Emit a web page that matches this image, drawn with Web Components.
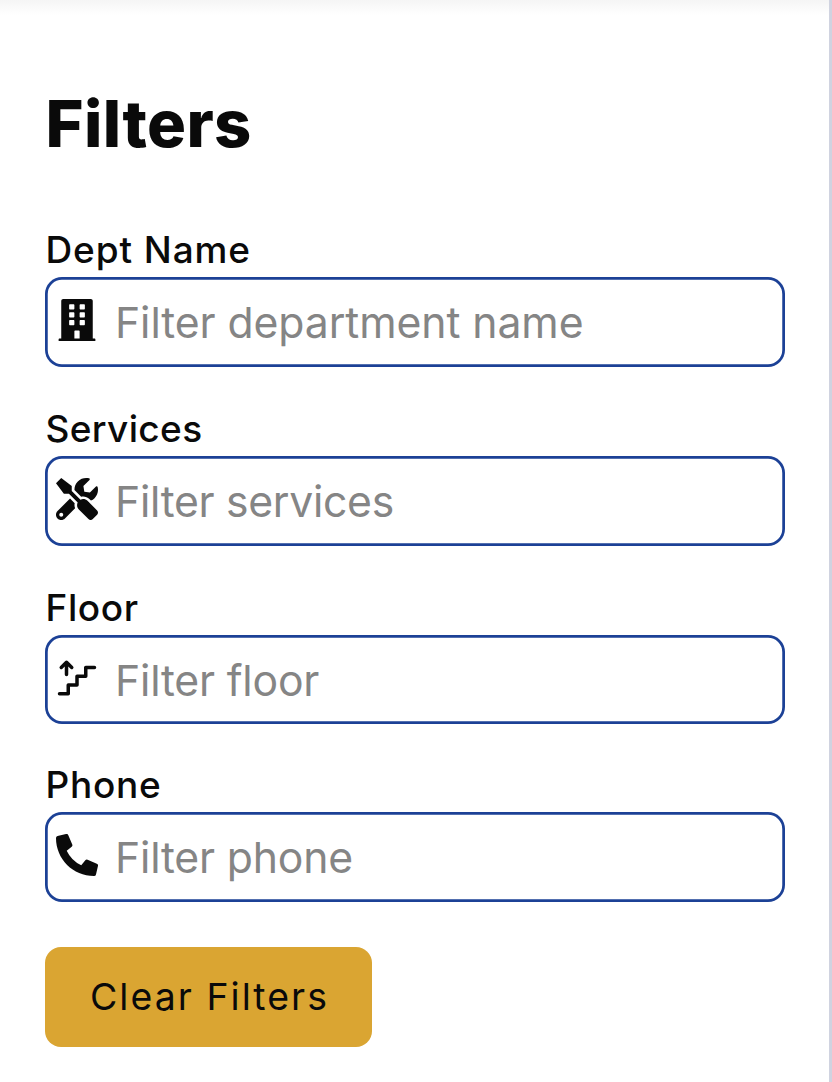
<!DOCTYPE html>
<html lang="en">
<head>
<meta charset="utf-8">
<title>Filters</title>
<style>
html,body{margin:0;height:100%;background:#fff}
body{font-family:Inter,"Liberation Sans",sans-serif;color:#0a0a0a;overflow:hidden}
</style>
</head>
<body>
<filter-panel>
  <span slot="title">Filters</span>
  <filter-field icon="building" style="--ls:.9px;--ps:-.08px"><span slot="label">Dept Name</span>Filter department name</filter-field>
  <filter-field icon="tools" style="--ls:.35px;--ps:-.29px"><span slot="label">Services</span>Filter services</filter-field>
  <filter-field icon="stairs" style="--ls:.6px;--ps:-.18px;--h:89px"><span slot="label">Floor</span>Filter floor</filter-field>
  <filter-field icon="phone" style="--ls:.72px;--ps:-.17px"><span slot="label">Phone</span>Filter phone</filter-field>
  <clear-button slot="action">Clear Filters</clear-button>
</filter-panel>
<script>
const icons = {
  building: '<svg viewBox="-32 0 512 512"><path d="M436 480h-20V24c0-13.255-10.745-24-24-24H56C42.745 0 32 10.745 32 24v456H12c-6.627 0-12 5.373-12 12v20h448v-20c0-6.627-5.373-12-12-12zM128 76c0-6.627 5.373-12 12-12h40c6.627 0 12 5.373 12 12v40c0 6.627-5.373 12-12 12h-40c-6.627 0-12-5.373-12-12V76zm0 96c0-6.627 5.373-12 12-12h40c6.627 0 12 5.373 12 12v40c0 6.627-5.373 12-12 12h-40c-6.627 0-12-5.373-12-12v-40zm52 148h-40c-6.627 0-12-5.373-12-12v-40c0-6.627 5.373-12 12-12h40c6.627 0 12 5.373 12 12v40c0 6.627-5.373 12-12 12zm76 160h-64v-84c0-6.627 5.373-12 12-12h40c6.627 0 12 5.373 12 12v84zm64-172c0 6.627-5.373 12-12 12h-40c-6.627 0-12-5.373-12-12v-40c0-6.627 5.373-12 12-12h40c6.627 0 12 5.373 12 12v40zm0-96c0 6.627-5.373 12-12 12h-40c-6.627 0-12-5.373-12-12v-40c0-6.627 5.373-12 12-12h40c6.627 0 12 5.373 12 12v40zm0-96c0 6.627-5.373 12-12 12h-40c-6.627 0-12-5.373-12-12V76c0-6.627 5.373-12 12-12h40c6.627 0 12 5.373 12 12v40z"/></svg>',
  tools: '<svg viewBox="0 0 512 512"><path d="M501.1 395.7L384 278.6c-23.1-23.1-57.6-27.6-85.4-13.9L192 158.1V96L64 0 0 64l96 128h62.1l106.6 106.6c-13.6 27.8-9.2 62.3 13.9 85.4l117.1 117.1c14.6 14.6 38.2 14.6 52.7 0l52.7-52.7c14.5-14.6 14.5-38.2 0-52.7zM331.7 225c28.3 0 54.9 11 74.9 31l19.4 19.4c15.8-6.9 30.8-16.5 43.8-29.5 37.1-37.1 49.7-89.3 37.9-136.7-2.2-9-13.5-12.1-20.1-5.5l-74.4 74.4-67.9-11.3L334 98.9l74.4-74.4c6.6-6.6 3.4-17.9-5.7-20.2-47.4-11.7-99.6.9-136.6 37.9-28.5 28.5-41.9 66.1-41.2 103.6l82.1 82.1c8.1-1.9 16.5-2.9 24.7-2.9zm-103.9 82l-56.7-56.7L18.7 402.8c-25 25-25 65.5 0 90.5s65.5 25 90.5 0l123.6-123.6c-7.6-19.9-9.9-41.6-5-62.7zM64 472c-13.2 0-24-10.8-24-24 0-13.3 10.7-24 24-24s24 10.7 24 24c0 13.2-10.7 24-24 24z"/></svg>',
  stairs: '<svg viewBox="0 0 24 24" style="fill:none;stroke:currentColor;stroke-width:2;stroke-linecap:round;stroke-linejoin:round"><path d="M22 6h-5v5h-5v5h-5v5h-5M6 10v-7M3 6l3-3 3 3"/></svg>',
  phone: '<svg viewBox="0 0 512 512"><path d="M497.39 361.8l-112-48a24 24 0 0 0-28 6.9l-49.6 60.6A370.66 370.66 0 0 1 130.6 204.11l60.6-49.6a23.94 23.94 0 0 0 6.9-28l-48-112A24.16 24.16 0 0 0 122.6.61l-104 24A24 24 0 0 0 0 48c0 256.5 207.9 464 464 464a24 24 0 0 0 23.4-18.6l24-104a24.29 24.29 0 0 0-14.01-27.6z"/></svg>'
};
class FilterField extends HTMLElement {
  connectedCallback() {
    this.attachShadow({mode:'open'}).innerHTML = `<style>
      :host{display:block}
      .label{height:50px;line-height:50px;margin-bottom:2px;padding-left:.5px;font-size:37px;font-weight:500;letter-spacing:var(--ls);white-space:nowrap}
      .box{box-sizing:border-box;width:740px;height:var(--h,90px);border-radius:17px;box-shadow:inset 0 0 0 2.75px #1c4196;display:flex;align-items:center;padding-left:11px;gap:17px}
      svg{display:block;width:42px;height:42px;fill:currentColor;flex:none;margin-bottom:4px}
      .text{font-size:42.7px;line-height:52px;padding-top:2px;color:#858585;letter-spacing:var(--ps);white-space:nowrap}
    </style><div class="label"><slot name="label"></slot></div><div class="box">${icons[this.getAttribute('icon')]}<div class="text"><slot></slot></div></div>`;
  }
}
class ClearButton extends HTMLElement {
  connectedCallback() {
    this.attachShadow({mode:'open'}).innerHTML = `<style>
      :host{display:block}
      button{display:block;width:327px;height:100px;border:0;border-radius:16px;padding:0 0 0 2px;background:#daa532;color:#0a0a0a;font:400 37.4px/100px Inter,"Liberation Sans",sans-serif;letter-spacing:2.05px;white-space:nowrap}
    </style><button><slot></slot></button>`;
  }
}
class FilterPanel extends HTMLElement {
  connectedCallback() {
    this.attachShadow({mode:'open'}).innerHTML = `<style>
      :host{display:block;box-sizing:border-box;height:1082px;padding:84px 44px 0 45px;border-right:3px solid #d0d3e0;background:linear-gradient(#f5f5f5,#fff 15px)}
      h1{margin:0 0 61px;padding-left:.5px;height:80px;line-height:80px;font-size:65px;font-weight:800;letter-spacing:.38px;white-space:nowrap}
      .fields{display:grid;grid-template-rows:179px 179px 177px 142px;height:721.5px}
    </style><h1><slot name="title"></slot></h1><div class="fields"><slot></slot></div><slot name="action"></slot>`;
  }
}
customElements.define('filter-panel', FilterPanel);
customElements.define('filter-field', FilterField);
customElements.define('clear-button', ClearButton);
</script>
</body>
</html>
